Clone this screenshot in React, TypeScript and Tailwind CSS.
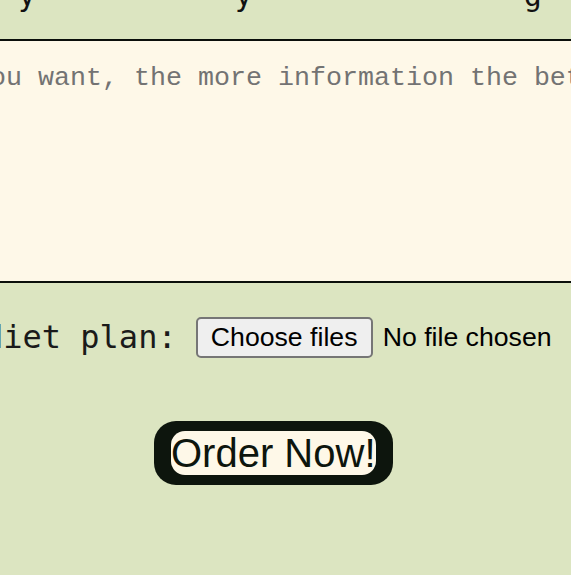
export default function App() {
  return (
    <div className="w-[571px] h-[575px] overflow-hidden bg-[#dce5c1] relative">
      <div className="h-[39px] overflow-hidden">
        <div
          className="mt-[-20px] whitespace-pre text-[30px] leading-[32px] text-[#111]"
          style={{ fontFamily: '"DejaVu Sans Mono", monospace' }}
        >
          {" y           y               g"}
        </div>
      </div>
      <div className="h-[244px] border-y-2 border-[#0b0f0b] bg-[#fef8e8] overflow-hidden">
        <div
          className="pt-[22px] ml-[-10px] whitespace-pre text-[26.67px] leading-[30px] text-[#737373]"
          style={{ fontFamily: '"Liberation Mono", "Courier New", monospace' }}
        >
          ou want, the more information the better.
        </div>
      </div>
      <div className="flex items-center h-[76px] pt-[32px]">
        <span
          className="whitespace-pre text-[32px] leading-[36px] text-[#1a1a1a] ml-[-16px]"
          style={{ fontFamily: '"DejaVu Sans Mono", monospace' }}
        >
          diet plan:
        </span>
        <div
          className="flex items-center ml-[19px]"
          style={{ fontFamily: '"Liberation Sans", Arial, sans-serif' }}
        >
          <span className="h-[41px] w-[177px] flex items-center justify-center rounded-[5px] border-2 border-[#767676] bg-[#efefef] text-[26.67px] text-black">
            Choose files
          </span>
          <span className="ml-[10px] text-[26.67px] text-black whitespace-nowrap">No file chosen</span>
        </div>
      </div>
      <div className="pt-[62px] pl-[154px]">
        <div
          className="inline-flex rounded-[22px] bg-[#0d150d] px-[17px] pt-[10px] pb-[10px]"
          style={{ fontFamily: '"Liberation Sans", Arial, sans-serif' }}
        >
          <span className="rounded-[14px] bg-[#fef8e8] text-[40px] leading-[44px] text-[#0d150d]">
            Order Now!
          </span>
        </div>
      </div>
    </div>
  );
}
